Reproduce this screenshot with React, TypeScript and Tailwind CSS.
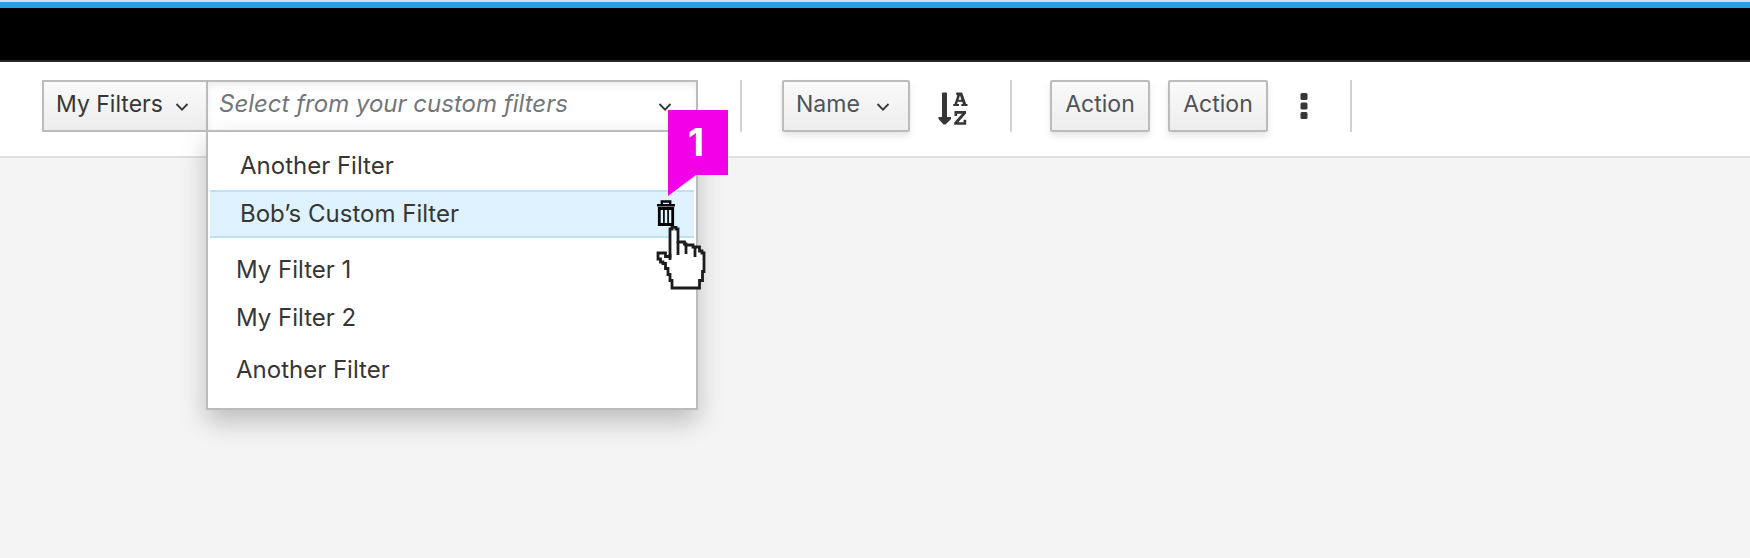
import type { ReactNode } from "react";

const buttonBase =
  "flex h-[52px] shrink-0 items-center border-2 border-[#bbbbbb] bg-linear-to-b from-[#fafafa] to-[#ededed] pb-[5px]";

function Chevron() {
  return (
    <svg width="14" height="8" viewBox="0 0 14 8" fill="none" aria-hidden="true">
      <path d="M1.5 1L7 6.6L12.5 1" stroke="#363636" strokeWidth="1.8" />
    </svg>
  );
}

function Divider() {
  return <div className="h-[52px] w-0.5 shrink-0 bg-[#d1d1d1]" />;
}

function ActionButton({ children }: { children: ReactNode }) {
  return (
    <button
      type="button"
      className={`${buttonBase} w-[100px] justify-center rounded-xs text-[#4d5258] shadow-[0_4px_6px_rgba(3,3,3,0.1)]`}
    >
      {children}
    </button>
  );
}

function SortIcon() {
  return (
    <svg width="30" height="34" viewBox="0 0 30 34" fill="#363636" aria-hidden="true">
      <path d="M4 1.500Q4 0.500 5 0.500H8Q9 0.500 9 1.500V25H13V27L7.500 32.500H5.500L0.500 27V25H4Z" />
      <path d="M19.500 0.500H24.100L28.200 12H29.500V14H23.300V12H24.900L24.1 9.800H19.800L19.1 12H21V14H15.200V12H16.500L19.400 3.200H18.300V0.500ZM20.500 7.700H23.400L22 3.600Z" fillRule="evenodd" />
      <path d="M16.500 19H28V21.500L20.300 30.300H25.600V27.800H28.200V32.800H16.200V30.400L24 21.700H19.1V24H16.500Z" />
    </svg>
  );
}

function TrashIcon() {
  return (
    <svg width="20" height="28" viewBox="0 0 20 28" aria-hidden="true">
      <path d="M1 5.2H19M5.8 5V1.500H14.200V5" fill="none" stroke="#030303" strokeWidth="2.4" />
      <path d="M3.300 8.500V24.500H16.700V8.500Z" fill="none" stroke="#030303" strokeWidth="2.8" />
      <path d="M7.900 9V24M12.100 9V24" stroke="#030303" strokeWidth="1.7" />
    </svg>
  );
}

function HandCursor() {
  return (
    <svg width="50" height="64" viewBox="0 0 50 64" aria-hidden="true">
      <path
        d="M16 3V1.300H20V3H22V16H28.5V18H30V19H37V21H43.5V25H46V27H48V45.5H46.5V54.500H43.500V62H16V54.500H14V48.500H12V42.500H9.500V37.500H7V36H4.500V33H2V27H9.500V30.500H14V3Z"
        fill="#ffffff"
        stroke="#1c1c1c"
        strokeWidth="2.8"
      />
      <path d="M22 15V29M30 18V28M39 21V31M14 28V34" fill="none" stroke="#1c1c1c" strokeWidth="2.8" />
    </svg>
  );
}

function Item({ children }: { children: ReactNode }) {
  return (
    <li>
      <button type="button" className="flex h-12 w-full items-center pl-7 text-left">
        {children}
      </button>
    </li>
  );
}

function Callout() {
  return (
    <div className="relative w-15">
      <svg viewBox="0 0 60 86" className="block w-full" aria-hidden="true">
        <path d="M0 0H60V65H28L0 86Z" fill="#f200e8" />
      </svg>
      <span className="absolute inset-x-0 top-0 flex h-16 items-center justify-center pr-1 text-[38px] font-bold text-white">
        1
      </span>
    </div>
  );
}

function FilterMenu() {
  return (
    <div className="absolute inset-x-0 top-[50px] border-2 border-[#bbbbbb] bg-white pt-2.5 pb-3.5 text-2xl shadow-[0_12px_24px_rgba(3,3,3,0.22)]">
      <ul className="mx-0.5">
        <li>
          <button type="button" className="flex h-12 w-full items-center pl-[30px] text-left">
            Another Filter
          </button>
        </li>
        <li className="relative flex h-12 items-center border-y-2 border-[#bee1f4] bg-[#def3ff]">
          <button type="button" className="h-full flex-1 pl-[30px] text-left">
            Bob’s Custom Filter
          </button>
          <button type="button" aria-label="Delete Bob’s Custom Filter" className="mr-[18px]">
            <TrashIcon />
          </button>
          <div className="absolute right-[-34px] bottom-10">
            <Callout />
          </div>
          <div className="pointer-events-none absolute top-[34px] right-[-12px]">
            <HandCursor />
          </div>
        </li>
      </ul>
      <ul className="pt-2">
        <Item>My Filter 1</Item>
        <Item>My Filter 2</Item>
      </ul>
      <ul className="pt-1">
        <Item>Another Filter</Item>
      </ul>
    </div>
  );
}

export default function App() {
  return (
    <div className="min-h-screen bg-[#f4f4f4] font-['Inter','Liberation_Sans',sans-serif] text-[23px] leading-7 text-[#363636]">
      <header className="h-[62px] border-t-2 border-[#dddddd] bg-black">
        <div className="h-full border-t-6 border-b-2 border-t-[#2d9fe0] border-b-[#292727]" />
      </header>
      <div className="flex h-24 items-start border-b-2 border-[#dfdfdf] bg-white pt-[18px] pl-[42px]">
        <button type="button" className={`${buttonBase} -mr-0.5 w-[166px] gap-3 border-r-0 pl-3`}>
          My Filters
          <span className="pt-1.5">
            <Chevron />
          </span>
        </button>
        <div className="relative w-[492px] shrink-0">
          <div className="flex h-[52px] items-center border-2 border-[#bbbbbb] bg-white shadow-[inset_0_4px_6px_rgba(3,3,3,0.07)]">
            <input
              type="text"
              aria-label="Custom filter"
              placeholder="Select from your custom filters"
              className="min-w-0 flex-1 bg-transparent pb-[5px] pl-[11px] text-2xl outline-none placeholder:text-[#72767b] placeholder:italic placeholder:opacity-100"
            />
            <button type="button" aria-label="Show filters" className="mr-6 flex h-full items-center pt-px">
              <Chevron />
            </button>
          </div>
          <FilterMenu />
        </div>
        <div className="ml-[42px] flex items-center">
          <Divider />
          <button
            type="button"
            className={`${buttonBase} mr-7 ml-10 w-32 justify-between rounded-xs pr-[18px] pl-3 text-[#4d5258] shadow-[0_4px_6px_rgba(3,3,3,0.1)]`}
          >
            Name
            <span className="pt-1.5">
              <Chevron />
            </span>
          </button>
          <button type="button" aria-label="Sort A to Z" className="mr-[42px] pt-1.5">
            <SortIcon />
          </button>
          <Divider />
          <div className="ml-[38px] flex gap-[18px]">
            <ActionButton>Action</ActionButton>
            <ActionButton>Action</ActionButton>
          </div>
          <button type="button" aria-label="More actions" className="mr-[42px] ml-8">
            <svg width="8" height="26" viewBox="0 0 8 26" fill="#363636" aria-hidden="true">
              <rect x="0.500" y="0" width="7" height="7" rx="1.500" />
              <rect x="0.500" y="9.500" width="7" height="7" rx="1.500" />
              <rect x="0.500" y="19" width="7" height="7" rx="1.500" />
            </svg>
          </button>
          <Divider />
        </div>
      </div>
    </div>
  );
}
